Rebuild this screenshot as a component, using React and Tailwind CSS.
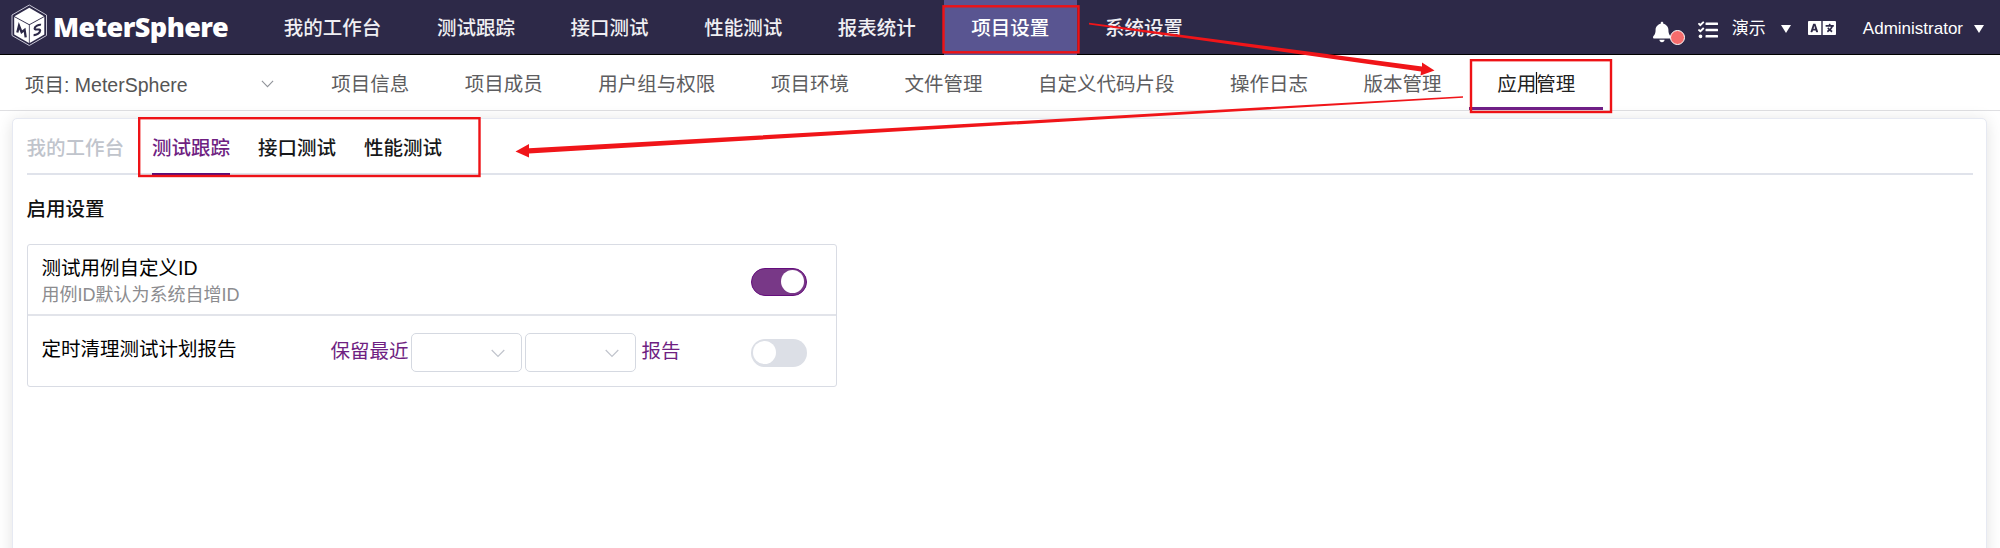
import React from "react";
import { FaBell, FaTasks, FaLanguage } from "react-icons/fa";

const mainNav = ["我的工作台", "测试跟踪", "接口测试", "性能测试", "报表统计", "项目设置", "系统设置"];
const subNav = ["项目信息", "项目成员", "用户组与权限", "项目环境", "文件管理", "自定义代码片段", "操作日志", "版本管理", "应用管理"];
const tabs = ["我的工作台", "测试跟踪", "接口测试", "性能测试"];

function Logo() {
  return (
    <div className="flex w-[256px] shrink-0 items-center pl-[11px]">
      <svg className="mb-[3px] h-[43px] w-[37px] shrink-0" viewBox="0 0 37 43">
        <path d="M18.300 1 35.500 11v20.500L18.300 41.500 1 31.500V11Z" fill="none" stroke="#c9c7d6" strokeWidth="1" />
        <path d="M18.300 3.800 33 12.300 18.300 20.300 3.500 12.300Z" fill="#fff" />
        <path d="M3.200 13 17.900 21V39L3.200 30.500Z" fill="#fff" />
        <path d="M33.300 13 18.700 21V39L33.300 30.500Z" fill="#fff" />
        <path d="M6.300 28.500 8 21.800l2.600 6.400 3-2.300 1.100 7.500" fill="none" stroke="#2d2948" strokeWidth="2.300" />
        <path d="M30 20.800c-2-.5-6.400 1.500-6.400 3.800 0 2.100 5.600-.3 5.600 2 0 2.400-4 4.600-6.600 4.500" fill="none" stroke="#2d2948" strokeWidth="2.100" />
      </svg>
      <span className="ml-[5px] font-['Noto_Sans',sans-serif] text-[27px] leading-[54px] font-black tracking-[-0.550px] text-white">MeterSphere</span>
    </div>
  );
}

function Caret() {
  return <span className="h-0 w-0 border-x-[5.500px] border-t-[8px] border-x-transparent border-t-white" />;
}

function Chevron({ className }) {
  return (
    <svg className={className} viewBox="0 0 14 9" fill="none" stroke="currentColor" strokeWidth="1.200">
      <path d="M.7 1 7 7.500 13.300 1" />
    </svg>
  );
}

function Header() {
  return (
    <header className="flex h-[55px] border-b border-black bg-[#2d2948] text-white">
      <Logo />
      <nav className="flex">
        {mainNav.map((t) => (
          <div
            key={t}
            className={
              "h-[55px] px-[27.800px] text-[19.500px] leading-[57px] font-medium whitespace-nowrap " +
              (t === "项目设置" ? "bg-[#595591]" : "text-[#f0eff3]")
            }
          >
            {t}
          </div>
        ))}
      </nav>
      <div className="ml-auto flex items-center pr-[16px] text-[17px] leading-[54px]">
        <div className="mt-[10px] flex items-end">
          <FaBell className="mb-[1px] h-[22px] w-[18px]" />
          <span className="-mb-[1px] -ml-px h-[15px] w-[15px] rounded-full border border-white bg-[#f56c6c]" />
        </div>
        <FaTasks className="mt-[5px] ml-[13px] h-[20px] w-[20px]" />
        <span className="mt-[4px] ml-[14px]">演示</span>
        <span className="mt-[3px] ml-[15px] flex"><Caret /></span>
        <FaLanguage className="mt-[2px] ml-[17px] h-[28px] w-[28px]" />
        <span className="mt-[4px] ml-[27px]">Administrator</span>
        <span className="mt-[3px] ml-[11px] flex"><Caret /></span>
      </div>
    </header>
  );
}

function SubHeader() {
  return (
    <div className="flex h-[56px] border-b border-[#dfdfe2] bg-white">
      <div className="flex w-[303.500px] shrink-0 items-center pl-[25px] text-[#555]">
        <span className="mt-[5px] w-[236px] text-[19.500px] leading-[60px] whitespace-nowrap">项目: MeterSphere</span>
        <Chevron className="mt-[2px] h-[8px] w-[13px] text-[#909399]" />
      </div>
      {subNav.map((t) => (
        <div
          key={t}
          className={
            "h-[55px] px-[27.780px] text-[19.500px] leading-[59px] whitespace-nowrap " +
            (t === "应用管理" ? "border-b-[3px] border-[#6f1f86] text-[#222]" : "text-[#5d5d60]")
          }
        >
          {t}
        </div>
      ))}
    </div>
  );
}

function Toggle({ on }) {
  return (
    <span className={"flex h-[28px] w-[56px] items-center rounded-full " + (on ? "justify-end border border-[#650d7d] bg-[#783887] px-[1.500px]" : "bg-[#dcdfe6] px-[2.500px]")}>
      <span className="h-[23px] w-[23px] rounded-full bg-white" />
    </span>
  );
}

function Select() {
  return (
    <span className="mr-[3px] flex h-[39px] w-[111px] items-center justify-end rounded-[5px] border border-[#d5d9e1] pr-[16px]">
      <Chevron className="mt-[2px] h-[9px] w-[14px] text-[#c0c4cc]" />
    </span>
  );
}

function Card() {
  return (
    <main className="mx-[12px] mt-[7px] h-[600px] w-[1975px] rounded-[5px] border border-[#e6e9f2] bg-white px-[13.500px] shadow-[0_2px_16px_rgba(0,0,0,0.12)]">
      <div className="flex h-[56px] gap-[28px] border-b-2 border-[#e0e3eb] text-[19.500px] leading-[59px] font-medium whitespace-nowrap">
        {tabs.map((t, i) => (
          <div
            key={t}
            className={
              i === 0
                ? "text-[#c0c4cc]"
                : i === 1
                ? "h-[56px] border-b-2 border-[#5b0e78] text-[#6f1f82]"
                : "text-[#17181a]"
            }
          >
            {t}
          </div>
        ))}
      </div>
      <h2 className="mt-[20px] h-[49px] text-[19.500px] leading-[29px] font-medium text-[#111]">启用设置</h2>
      <section className="w-[810px] rounded-[3px] border border-[#d9dce4] text-[19.500px] text-black">
        <div className="flex h-[71px] items-center justify-between border-b-2 border-[#e2e4ea] pr-[29px] pl-[14px]">
          <div className="mt-[3px]">
            <div className="h-[27px] leading-[27px]">测试用例自定义ID</div>
            <div className="h-[26px] text-[18px] leading-[27px] text-[#8c8c8f]">用例ID默认为系统自增ID</div>
          </div>
          <span className="mt-[4px]"><Toggle on /></span>
        </div>
        <div className="flex h-[70px] items-center pr-[29px] pl-[14px]">
          <span className="mb-[2px] w-[289px]">定时清理测试计划报告</span>
          <span className="mt-[2px] mr-[3px] text-[#6f1f82]">保留最近</span>
          <span className="mt-[2px] -ml-px flex"><Select /><Select /></span>
          <span className="mt-[2px] ml-[3px] text-[#6f1f82]">报告</span>
          <span className="mt-[3px] ml-auto"><Toggle /></span>
        </div>
      </section>
    </main>
  );
}

function Annotations() {
  return (
    <svg className="pointer-events-none absolute inset-0 h-[548px] w-[2000px]" viewBox="0 0 2000 548">
      <g fill="none" stroke="#ee1216" strokeWidth="2.400">
        <rect x="943.500" y="6.300" width="135" height="46" />
        <rect x="1471" y="60.200" width="140" height="51.800" />
        <rect x="139.200" y="118.200" width="340.300" height="57.800" />
      </g>
      <g fill="#f01519">
        <path d="M1089 22.800 1089 24.400 1421 71.500 1420.500 75.500 1434.500 70.500 1422 62.500 1422 66.500Z" />
        <path d="M1463 96.200 1463 97.800 529 153.500 529 157.500 515.500 151.500 529 144 529 148.300Z" />
      </g>
      <path d="M1536.500 72v22" stroke="#111" strokeWidth="1.200" />
    </svg>
  );
}

export default function App() {
  return (
    <div className="relative h-[548px] w-[2000px] overflow-hidden bg-white font-['Liberation_Sans','Noto_Sans_CJK_SC',sans-serif]">
      <Header />
      <SubHeader />
      <Card />
      <Annotations />
    </div>
  );
}
